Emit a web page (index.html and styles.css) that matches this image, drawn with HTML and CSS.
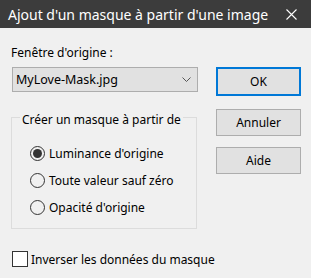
FILE: index.html
```html
<!DOCTYPE html>
<html lang="fr">
<head>
    <meta charset="UTF-8">
    <title>Ajout d'un masque à partir d'une image</title>
    <link rel="stylesheet" href="styles.css">
</head>
<body>
    <div class="dialog">
        <div class="titlebar">
            <span class="title">Ajout d'un masque à partir d'une image</span>
            <svg class="close" width="11" height="11" viewBox="0 0 11 11">
                <path d="M0.5 0.5 L10.5 10.5 M10.5 0.5 L0.5 10.5" stroke="#fff" stroke-width="1.1" fill="none"/>
            </svg>
        </div>
        <div class="content">
            <div class="left">
                <div class="label">Fenêtre d'origine :</div>
                <div class="combo">
                    <span>MyLove-Mask.jpg</span>
                    <svg width="9" height="5" viewBox="0 0 9 5">
                        <path d="M0.5 0.5 L4.5 4.5 L8.5 0.5" stroke="#555" stroke-width="1" fill="none"/>
                    </svg>
                </div>
                <fieldset class="group">
                    <legend>Créer un masque à partir de</legend>
                    <div class="radio-row"><span class="radio checked"></span>Luminance d'origine</div>
                    <div class="radio-row"><span class="radio"></span>Toute valeur sauf zéro</div>
                    <div class="radio-row"><span class="radio"></span>Opacité d'origine</div>
                </fieldset>
                <div class="check-row"><span class="checkbox"></span>Inverser les données du masque</div>
            </div>
            <div class="buttons">
                <button class="btn default">OK</button>
                <button class="btn cancel">Annuler</button>
                <button class="btn">Aide</button>
            </div>
        </div>
    </div>
</body>
</html>
```

FILE: styles.css
```css
body {
    margin: 0;
    background: #f0f0f0;
    font-family: 'Noto Sans', sans-serif;
    font-size: 12px;
    color: #000;
}

.dialog {
    width: 311px;
    height: 278px;
    overflow: hidden;
    white-space: nowrap;
}

.titlebar {
    height: 28px;
    background: #3c3c3c;
    color: #fff;
    display: flex;
    align-items: center;
    justify-content: space-between;
    padding-left: 8px;
}

.title {
    font-size: 14px;
}

.close {
    margin-right: 14px;
}

.content {
    display: flex;
    padding-left: 11px;
}

.left {
    width: 187px;
}

.label {
    margin-top: 17px;
    line-height: 16px;
}

.combo {
    margin: 6px 0 0 1px;
    height: 23px;
    border: 1px solid #adadad;
    background: #e1e1e1;
    display: flex;
    align-items: center;
    justify-content: space-between;
    padding: 0 6px 0 3px;
    font-size: 12.5px;
}

.group {
    margin: 14px 0 0;
    padding: 12px 0 7px 18px;
    border: 1px solid #dcdcdc;
    width: 186px;
    min-width: 0;
    box-sizing: border-box;
}

.group legend {
    padding: 6px 2px 0;
    margin-left: -10px;
    line-height: 16px;
}

.radio-row {
    height: 27px;
    display: flex;
    align-items: center;
}

.radio {
    flex: none;
    width: 13px;
    height: 13px;
    border: 1px solid #333;
    border-radius: 50%;
    margin-right: 4px;
    display: flex;
    align-items: center;
    justify-content: center;
}

.radio.checked::after {
    content: '';
    width: 9px;
    height: 9px;
    border-radius: 50%;
    background: #333;
}

.check-row {
    margin: 22px 0 0 1px;
    height: 16px;
    display: flex;
    align-items: center;
}

.checkbox {
    flex: none;
    width: 14px;
    height: 14px;
    border: 1px solid #333;
    background: #fff;
    margin-right: 3px;
}

.buttons {
    margin-left: 18px;
    padding-top: 39px;
    display: flex;
    flex-direction: column;
}

.btn {
    width: 85px;
    height: 27px;
    border: 1px solid #adadad;
    background: #e1e1e1;
    font-family: inherit;
    font-size: 12px;
    color: #000;
    padding: 0;
}

.btn.default {
    height: 29px;
    border: 2px solid #0078d7;
}

.btn.cancel {
    margin: 13px 0 11px;
}
```
